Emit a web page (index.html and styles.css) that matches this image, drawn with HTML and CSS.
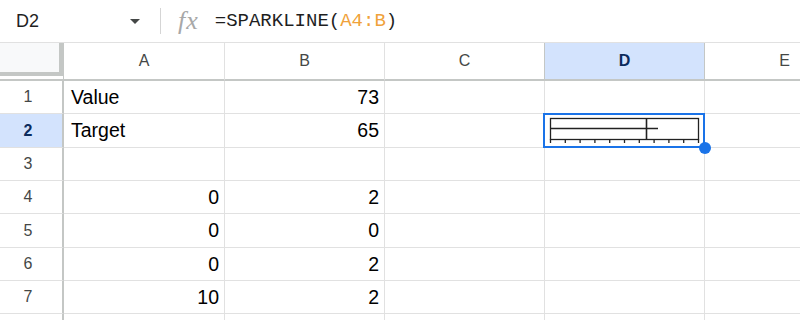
FILE: index.html
```html
<!DOCTYPE html>
<html lang="en">
<head>
  <meta charset="UTF-8">
  <title>Sparkline</title>
  <link rel="stylesheet" href="styles.css">
</head>
<body>
  <div class="formula-bar">
    <div class="name-box">D2</div>
    <span class="caret"></span>
    <span class="divider"></span>
    <span class="fx">fx</span>
    <div class="formula">=SPARKLINE(<span class="ref">A4:B</span>)</div>
  </div>

  <div class="sheet">
    <!-- column headers -->
    <div class="corner"><span></span></div>
    <div class="col-head">A</div>
    <div class="col-head">B</div>
    <div class="col-head">C</div>
    <div class="col-head active">D</div>
    <div class="col-head">E</div>

    <!-- row 1 -->
    <div class="row-head">1</div>
    <div class="cell">Value</div>
    <div class="cell num">73</div>
    <div class="cell"></div>
    <div class="cell"></div>
    <div class="cell"></div>

    <!-- row 2 -->
    <div class="row-head active">2</div>
    <div class="cell">Target</div>
    <div class="cell num">65</div>
    <div class="cell"></div>
    <div class="cell selected">
      <svg class="bullet" width="158" height="32" viewBox="0 0 158 32">
        <rect x="5.5" y="4.5" width="148" height="21" fill="none" stroke="#222" stroke-width="1.3"/>
        <line x1="5" y1="14.5" x2="113" y2="14.5" stroke="#222" stroke-width="1.6"/>
        <line x1="101.5" y1="4" x2="101.5" y2="26" stroke="#222" stroke-width="1.6"/>
        <g stroke="#222" stroke-width="1.3">
          <line x1="5.5" y1="25" x2="5.5" y2="29"/>
          <line x1="20.3" y1="25" x2="20.3" y2="29"/>
          <line x1="35.1" y1="25" x2="35.1" y2="29"/>
          <line x1="49.9" y1="25" x2="49.9" y2="29"/>
          <line x1="64.7" y1="25" x2="64.7" y2="29"/>
          <line x1="79.5" y1="25" x2="79.5" y2="29"/>
          <line x1="94.3" y1="25" x2="94.3" y2="29"/>
          <line x1="109.1" y1="25" x2="109.1" y2="29"/>
          <line x1="123.9" y1="25" x2="123.9" y2="29"/>
          <line x1="138.7" y1="25" x2="138.7" y2="29"/>
          <line x1="153.5" y1="25" x2="153.5" y2="29"/>
        </g>
      </svg>
      <span class="handle"></span>
    </div>
    <div class="cell"></div>

    <!-- row 3 -->
    <div class="row-head">3</div>
    <div class="cell"></div>
    <div class="cell"></div>
    <div class="cell"></div>
    <div class="cell"></div>
    <div class="cell"></div>

    <!-- row 4 -->
    <div class="row-head">4</div>
    <div class="cell num">0</div>
    <div class="cell num">2</div>
    <div class="cell"></div>
    <div class="cell"></div>
    <div class="cell"></div>

    <!-- row 5 -->
    <div class="row-head">5</div>
    <div class="cell num">0</div>
    <div class="cell num">0</div>
    <div class="cell"></div>
    <div class="cell"></div>
    <div class="cell"></div>

    <!-- row 6 -->
    <div class="row-head">6</div>
    <div class="cell num">0</div>
    <div class="cell num">2</div>
    <div class="cell"></div>
    <div class="cell"></div>
    <div class="cell"></div>

    <!-- row 7 -->
    <div class="row-head">7</div>
    <div class="cell num">10</div>
    <div class="cell num">2</div>
    <div class="cell"></div>
    <div class="cell"></div>
    <div class="cell"></div>

    <!-- row 8 -->
    <div class="row-head"></div>
    <div class="cell"></div>
    <div class="cell"></div>
    <div class="cell"></div>
    <div class="cell"></div>
    <div class="cell"></div>
  </div>
</body>
</html>
```

FILE: styles.css
```css
* {
  box-sizing: border-box;
}

body {
  margin: 0;
  width: 800px;
  height: 320px;
  overflow: hidden;
  background-color: #fff;
  font-family: 'Liberation Sans', Arial, sans-serif;
  color: #000;
}

.formula-bar {
  height: 43px;
  display: flex;
  align-items: center;
  border-bottom: 1px solid #e1e1e1;
}

.name-box {
  width: 130px;
  padding-left: 16px;
  font-size: 18px;
  color: #1f1f1f;
}

.caret {
  width: 0;
  height: 0;
  border-left: 5px solid transparent;
  border-right: 5px solid transparent;
  border-top: 5px solid #444746;
  margin-right: 20px;
}

.divider {
  width: 1px;
  height: 26px;
  background-color: #d5d5d5;
  margin-right: 17px;
}

.fx {
  font-family: 'Liberation Serif', serif;
  font-style: italic;
  font-size: 26px;
  color: #a8a8a8;
  margin-right: 16px;
  letter-spacing: 1px;
}

.formula {
  font-family: 'Liberation Mono', monospace;
  font-size: 19px;
  color: #1f1f1f;
}

.ref {
  color: #f0a23a;
}

.sheet {
  width: 800px;
  height: 277px;
  overflow: hidden;
  display: grid;
  grid-template-columns: 64px 161px 160px 160px 160px 160px;
  grid-template-rows: 38px 33px 34px 33px 33px 34px 33px 33px 33px;
}

.corner {
  border-right: 1px solid #c4c7c5;
  border-bottom: 2px solid #c4c7c5;
}

.corner span {
  display: block;
  height: 33px;
  background-color: #f8f9fa;
  border-right: 4px solid #c4c7c5;
  border-bottom: 4px solid #c4c7c5;
}

.col-head {
  display: flex;
  align-items: center;
  justify-content: center;
  font-size: 16px;
  color: #444746;
  border-right: 1px solid #e1e1e1;
  border-bottom: 2px solid #c4c7c5;
}

.col-head.active {
  background-color: #d3e3fd;
  color: #0b2b5c;
  font-weight: bold;
  border-right-color: #c4c7c5;
  border-left: 1px solid #c4c7c5;
  margin-left: -1px;
}

.row-head {
  display: flex;
  align-items: center;
  justify-content: center;
  font-size: 16px;
  color: #444746;
  border-right: 2px solid #c4c7c5;
  border-bottom: 1px solid #e1e1e1;
  padding-right: 6px;
}

.row-head.active {
  background-color: #d3e3fd;
  color: #0b2b5c;
  font-weight: bold;
}

.cell {
  display: flex;
  align-items: center;
  padding: 0 5px 0 7px;
  font-size: 19.5px;
  border-right: 1px solid #e1e1e1;
  border-bottom: 1px solid #e1e1e1;
  white-space: nowrap;
  overflow: hidden;
}

.cell.num {
  justify-content: flex-end;
}

.cell.selected {
  position: relative;
  overflow: visible;
  padding: 0;
  align-items: flex-start;
}

.cell.selected::after {
  content: "";
  position: absolute;
  top: -1px;
  left: -2px;
  right: -1px;
  bottom: -1px;
  border: 2px solid #1a73e8;
}

.bullet {
  display: block;
}

.handle {
  position: absolute;
  right: -7px;
  bottom: -7px;
  width: 12px;
  height: 12px;
  border-radius: 50%;
  background-color: #1a73e8;
  z-index: 2;
}
```
